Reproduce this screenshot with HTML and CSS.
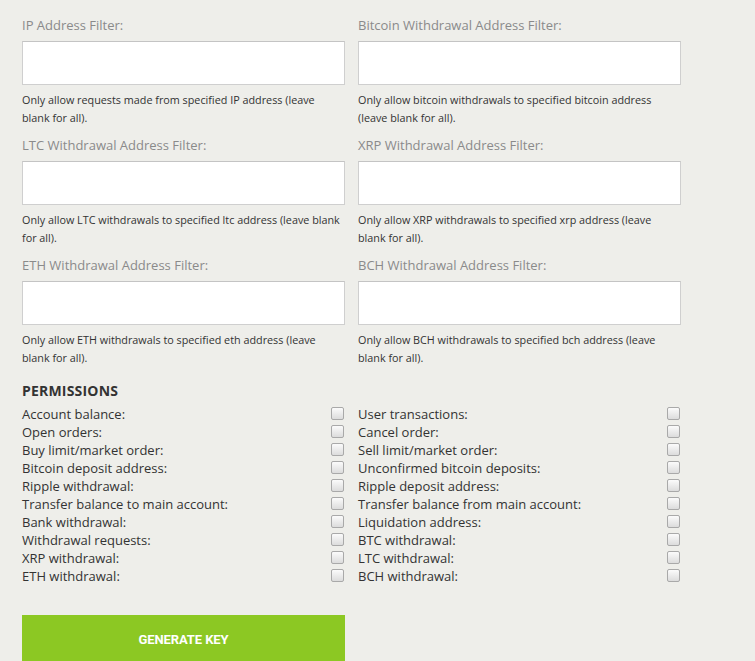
FILE: index.html
```html
<!DOCTYPE html>
<html>
<head>
<meta charset="utf-8">
<link rel="stylesheet" href="styles.css">
</head>
<body>
<div class="page">
  <div class="filters">
    <div class="field">
      <label class="field-label">IP Address Filter:</label>
      <input class="field-input" type="text">
      <p class="help">Only allow requests made from specified IP address (leave blank for all).</p>
    </div>
    <div class="field">
      <label class="field-label">Bitcoin Withdrawal Address Filter:</label>
      <input class="field-input" type="text">
      <p class="help">Only allow bitcoin withdrawals to specified bitcoin address (leave blank for all).</p>
    </div>
    <div class="field">
      <label class="field-label">LTC Withdrawal Address Filter:</label>
      <input class="field-input" type="text">
      <p class="help">Only allow LTC withdrawals to specified ltc address (leave blank for all).</p>
    </div>
    <div class="field">
      <label class="field-label">XRP Withdrawal Address Filter:</label>
      <input class="field-input" type="text">
      <p class="help">Only allow XRP withdrawals to specified xrp address (leave blank for all).</p>
    </div>
    <div class="field">
      <label class="field-label">ETH Withdrawal Address Filter:</label>
      <input class="field-input" type="text">
      <p class="help">Only allow ETH withdrawals to specified eth address (leave blank for all).</p>
    </div>
    <div class="field">
      <label class="field-label">BCH Withdrawal Address Filter:</label>
      <input class="field-input" type="text">
      <p class="help">Only allow BCH withdrawals to specified bch address (leave blank for all).</p>
    </div>
  </div>

  <h3 class="perm-title">PERMISSIONS</h3>
  <div class="perms">
    <label class="perm"><span>Account balance:</span><input type="checkbox" class="cb"></label>
    <label class="perm"><span>User transactions:</span><input type="checkbox" class="cb"></label>
    <label class="perm"><span>Open orders:</span><input type="checkbox" class="cb"></label>
    <label class="perm"><span>Cancel order:</span><input type="checkbox" class="cb"></label>
    <label class="perm"><span>Buy limit/market order:</span><input type="checkbox" class="cb"></label>
    <label class="perm"><span>Sell limit/market order:</span><input type="checkbox" class="cb"></label>
    <label class="perm"><span>Bitcoin deposit address:</span><input type="checkbox" class="cb"></label>
    <label class="perm"><span>Unconfirmed bitcoin deposits:</span><input type="checkbox" class="cb"></label>
    <label class="perm"><span>Ripple withdrawal:</span><input type="checkbox" class="cb"></label>
    <label class="perm"><span>Ripple deposit address:</span><input type="checkbox" class="cb"></label>
    <label class="perm"><span>Transfer balance to main account:</span><input type="checkbox" class="cb"></label>
    <label class="perm"><span>Transfer balance from main account:</span><input type="checkbox" class="cb"></label>
    <label class="perm"><span>Bank withdrawal:</span><input type="checkbox" class="cb"></label>
    <label class="perm"><span>Liquidation address:</span><input type="checkbox" class="cb"></label>
    <label class="perm"><span>Withdrawal requests:</span><input type="checkbox" class="cb"></label>
    <label class="perm"><span>BTC withdrawal:</span><input type="checkbox" class="cb"></label>
    <label class="perm"><span>XRP withdrawal:</span><input type="checkbox" class="cb"></label>
    <label class="perm"><span>LTC withdrawal:</span><input type="checkbox" class="cb"></label>
    <label class="perm"><span>ETH withdrawal:</span><input type="checkbox" class="cb"></label>
    <label class="perm"><span>BCH withdrawal:</span><input type="checkbox" class="cb"></label>
  </div>

  <button class="generate" type="button">GENERATE KEY</button>
</div>
</body>
</html>
```

FILE: styles.css
```css
html, body {
  margin: 0;
  padding: 0;
  background: #eeeeea;
}

body {
  font-family: "Open Sans", "DejaVu Sans", sans-serif;
  color: #333;
}

.page {
  width: 659px;
  padding: 15px 0 0 22px;
}

.filters {
  display: grid;
  grid-template-columns: 323px 323px;
  column-gap: 13px;
  row-gap: 8px;
}

.field {
  display: flex;
  flex-direction: column;
}

.field-label {
  font-size: 13px;
  line-height: 20px;
  color: #8a8a8a;
  margin-bottom: 6px;
}

.field-input {
  box-sizing: border-box;
  width: 323px;
  height: 44px;
  margin: 0;
  border: 1px solid #cfcfcf;
  border-top-color: #c4c4c4;
  background: #fff;
  font: inherit;
  padding: 0 10px;
  outline: none;
}

.help {
  margin: 6px 0 0;
  font-size: 10.8px;
  line-height: 18px;
  color: #333;
}

.perm-title {
  margin: 14px 0 4px;
  font-size: 14px;
  line-height: 20px;
  font-weight: 700;
  color: #333;
  letter-spacing: 0.2px;
}

.perms {
  display: grid;
  grid-template-columns: 323px 323px;
  column-gap: 13px;
}

.perm {
  display: flex;
  justify-content: space-between;
  align-items: center;
  height: 18px;
  font-size: 13px;
  line-height: 18px;
  color: #333;
}

.cb {
  appearance: none;
  -webkit-appearance: none;
  box-sizing: border-box;
  width: 13px;
  height: 13px;
  margin: -1px 1px 0 0;
  border: 1px solid #a9a9a9;
  border-radius: 2px;
  background: linear-gradient(#fbfbfb, #dcdcdc);
}

.generate {
  display: block;
  width: 323px;
  height: 48px;
  margin-top: 30px;
  border: none;
  background: #8cc823;
  color: #fff;
  font-family: Roboto, "Liberation Sans", sans-serif;
  font-weight: 700;
  font-size: 13px;
  letter-spacing: -0.1px;
  padding: 0;
}
```
